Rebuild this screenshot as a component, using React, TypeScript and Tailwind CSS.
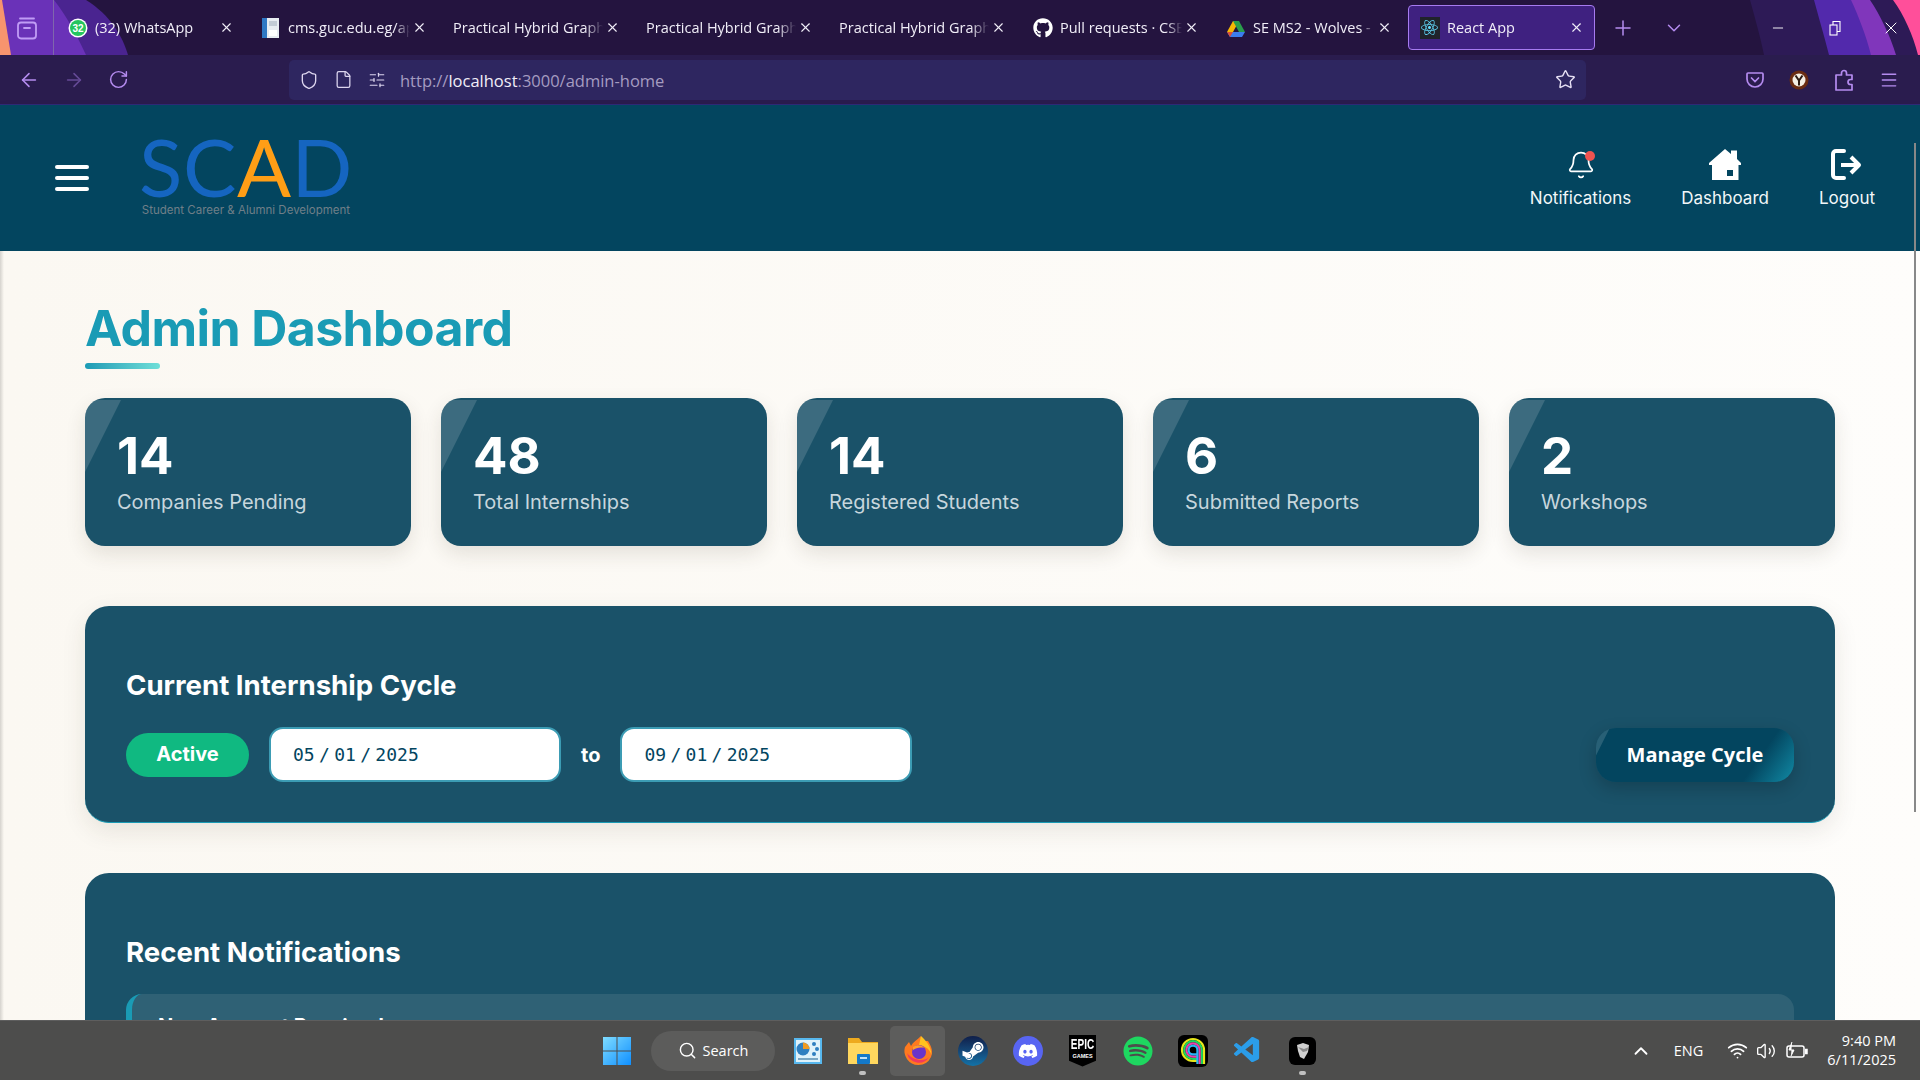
import {
  ArrowLeft,
  ArrowRight,
  Bell,
  ChevronDown,
  ChevronUp,
  File,
  Menu,
  Minus,
  Plus,
  RotateCw,
  Search,
  Shield,
  SlidersHorizontal,
  Star,
  Volume2,
  Wifi,
  X,
} from "lucide-react";
import { FaDiscord, FaGithub, FaReact, FaSpotify, FaSteamSymbol } from "react-icons/fa";
import { VscVscode } from "react-icons/vsc";

const stats = [
  { value: "14", label: "Companies Pending" },
  { value: "48", label: "Total Internships" },
  { value: "14", label: "Registered Students" },
  { value: "6", label: "Submitted Reports" },
  { value: "2", label: "Workshops" },
];

function WhatsAppIcon() {
  return (
    <svg width="20" height="20" viewBox="0 0 20 20">
      <circle cx="10" cy="10" r="9.5" fill="#fff" />
      <circle cx="10" cy="10" r="8" fill="#25c55f" />
      <text x="10" y="13.5" textAnchor="middle" fontSize="10" fontWeight="700" fill="#fff" fontFamily="Liberation Sans">
        32
      </text>
    </svg>
  );
}

function CmsIcon() {
  return (
    <svg width="20" height="20" viewBox="0 0 20 20">
      <rect x="1" y="0" width="17" height="20" fill="#e8edf2" />
      <rect x="1" y="0" width="5" height="20" fill="#2f78c4" />
      <rect x="8" y="3" width="8" height="5" fill="#c3ccd6" />
      <rect x="8" y="12" width="8" height="6" fill="#fff" />
    </svg>
  );
}

function DriveIcon() {
  return (
    <svg width="20" height="20" viewBox="0 0 20 20">
      <polygon points="7,1 13,1 7,12 1,12" fill="#f6b704" transform="translate(0 2)" />
      <polygon points="13,3 19,14 13,14 7,3" fill="#2a9d4c" />
      <polygon points="1,14 19,14 16,19 4,19" fill="#3b7ded" />
      <polygon points="7,14 1,14 4,19" fill="#d94f3a" />
    </svg>
  );
}

function ReactTabIcon() {
  return (
    <span className="flex h-[22px] w-[20px] items-center justify-center bg-[#20232a]">
      <FaReact size={17} color="#61dafb" />
    </span>
  );
}

type TabInfo = { title: string; icon?: React.ReactNode; active?: boolean };

const tabs: TabInfo[] = [
  { title: "(32) WhatsApp", icon: <WhatsAppIcon /> },
  { title: "cms.guc.edu.eg/apps/student", icon: <CmsIcon /> },
  { title: "Practical Hybrid Graph-based" },
  { title: "Practical Hybrid Graph-based" },
  { title: "Practical Hybrid Graph-based" },
  { title: "Pull requests · CSEN", icon: <FaGithub size={20} color="#fff" /> },
  { title: "SE MS2 - Wolves - Google", icon: <DriveIcon /> },
  { title: "React App", icon: <ReactTabIcon />, active: true },
];

function BrowserTab({ tab }: { tab: TabInfo }) {
  return (
    <div className="h-full w-[193px] shrink-0 px-[3px] py-[5px]">
      <div
        className={`flex h-full items-center rounded-[4px] pl-[10px] pr-[10px] ${
          tab.active ? "border border-[#a67bf0] bg-[#3f2180]" : ""
        }`}
      >
        {tab.icon && <span className="mr-[7px] flex w-[21px] shrink-0 items-center justify-center">{tab.icon}</span>}
        <span className="min-w-0 flex-1 overflow-hidden whitespace-nowrap pt-[1px] text-[14.5px] text-[#f1eef8] [mask-image:linear-gradient(to_right,black_88%,transparent)]">
          {tab.title}
        </span>
        <X size={15} color="#f1eef8" strokeWidth={1.8} className="ml-[2px] shrink-0" />
      </div>
    </div>
  );
}

function BrowserChrome() {
  return (
    <div className="shrink-0 font-['Open_Sans',sans-serif]">
      {/* tab strip */}
      <div className="relative flex h-[55px] items-center bg-[#24143f]">
        <svg className="absolute left-0 top-0 h-[55px] w-[140px]" viewBox="0 0 140 55">
          <path d="M0 0 H86 C110 15 122 35 128 55 H0 Z" fill="#4a2490" />
          <path d="M40 0 H54 C68 18 78 38 86 55 H0 V0 Z" fill="#6a32b8" />
          <path d="M0 0 H2 L11 55 H0 Z" fill="#f7946e" />
        </svg>
        <svg className="absolute right-0 top-0 h-[55px] w-[170px]" viewBox="0 0 170 55">
          <path d="M0 0 H170 V55 H14 C10 35 4 15 0 0 Z" fill="#2d1a56" />
          <path d="M64 0 H170 V55 H79 C74 35 68 15 64 0 Z" fill="#5229ac" />
          <path d="M101 0 H170 V55 H121 C116 35 108 15 101 0 Z" fill="#8036bb" />
          <path d="M120 0 H170 V55 H146 C140 35 130 15 120 0 Z" fill="#2d1a56" />
          <path d="M143 0 H170 V55 H168 C163 35 154 15 143 0 Z" fill="#ff4f9a" />
        </svg>
        <div className="relative flex h-full w-[54px] shrink-0 items-center justify-center border-r border-[#7f66ad]">
          <svg width="22" height="24" viewBox="0 0 22 24" fill="none" stroke="#c09cf5" strokeWidth="1.8">
            <path d="M4 2.5 H18" strokeLinecap="round" />
            <rect x="2" y="6.5" width="18" height="16" rx="3" />
            <path d="M8 12 H14" strokeLinecap="round" />
          </svg>
        </div>
        <div className="relative flex h-full">
          {tabs.map((tab, i) => (
            <BrowserTab key={i} tab={tab} />
          ))}
        </div>
        <div className="relative ml-[13px] flex items-center gap-[28px]">
          <Plus size={24} color="#b58cf0" strokeWidth={1.5} />
          <ChevronDown size={22} color="#b58cf0" strokeWidth={1.6} />
        </div>
        <div className="relative ml-auto flex items-center pr-[19px] text-white">
          <Minus size={16} strokeWidth={1.4} />
          <svg width="16" height="16" viewBox="0 0 16 16" fill="none" stroke="#fff" strokeWidth="1.1" className="ml-[41px]">
            <rect x="3" y="5" width="7" height="10" />
            <path d="M6 5 V1.5 H13 V11.5 H10" />
          </svg>
          <X size={20} strokeWidth={1.2} className="ml-[38px]" />
        </div>
      </div>

      {/* toolbar */}
      <div className="flex h-[49px] items-center bg-[#2a1c4e] pl-[18px] pr-[21px]">
        <div className="flex w-[271px] shrink-0 items-center gap-[23px]">
          <ArrowLeft size={22} color="#b58cf0" strokeWidth={1.7} />
          <ArrowRight size={22} color="#654a96" strokeWidth={1.7} />
          <RotateCw size={21} color="#b58cf0" strokeWidth={1.7} />
        </div>
        <div className="flex h-[40px] w-[1297px] shrink-0 items-center rounded-[5px] bg-[#2e2660] pl-[10px] pr-[10px]">
          <Shield size={20} color="#ddd6ef" strokeWidth={1.6} />
          <File size={19} color="#ddd6ef" strokeWidth={1.6} className="ml-[15px]" />
          <SlidersHorizontal size={18} color="#ddd6ef" strokeWidth={1.6} className="ml-[15px]" />
          <span className="ml-[14px] pt-[3px] text-[16.5px] text-[#a59cc0]">
            http://<span className="text-[#f1eef8]">localhost</span>:3000/admin-home
          </span>
          <Star size={21} color="#e6e0f4" strokeWidth={1.6} className="ml-auto" />
        </div>
        <div className="ml-auto flex items-center gap-[24px]">
          <svg width="20" height="20" viewBox="0 0 20 20" fill="none" stroke="#b58cf0" strokeWidth="1.7">
            <path d="M3 3 H17 A1 1 0 0 1 18 4 V9 A8 8 0 0 1 2 9 V4 A1 1 0 0 1 3 3 Z" />
            <path d="M6.5 8 L10 11.5 L13.5 8" strokeLinecap="round" />
          </svg>
          <svg width="20" height="24" viewBox="0 0 20 24">
            <circle cx="10" cy="12" r="9.5" fill="#6a2c12" />
            <circle cx="10" cy="12" r="6.5" fill="#f4eee4" />
            <path d="M6.5 7.5 L10 12.5 L13.5 7.5 M10 12.5 V17.5" stroke="#2c1a12" strokeWidth="2" fill="none" />
          </svg>
          <svg width="22" height="24" viewBox="0 0 22 24" fill="none" stroke="#b58cf0" strokeWidth="1.7" strokeLinejoin="round">
            <path d="M3 7 H8.5 V5 a2.5 2.5 0 0 1 5 0 V7 H19 V11.5 H17.5 a2.5 2.5 0 0 0 0 5 H19 V22 H3 Z" />
          </svg>
          <Menu size={20} color="#b58cf0" strokeWidth={1.7} />
        </div>
      </div>
      <div className="h-px bg-[#2f2a78]" />
    </div>
  );
}

function ScadLogo() {
  return (
    <div className="ml-[52px] flex w-[210px] flex-col items-center pb-[4px] font-['Lato',sans-serif]">
      <div className="whitespace-nowrap text-[80px] font-normal leading-[62px] tracking-[0.5px] text-[#1565c0]">
        SC<span className="text-[#ff9e16]">A</span>D
      </div>
      <div className="mt-[6px] whitespace-nowrap font-['Inter',sans-serif] text-[11.5px] leading-[14px] text-[#6f7f88]">
        Student Career &amp; Alumni Development
      </div>
    </div>
  );
}

function AppHeader() {
  return (
    <header className="flex h-[146px] shrink-0 items-center bg-[#03455f] pl-[55px] pr-[45px] shadow-[0_3px_8px_rgba(0,0,0,0.12)]">
      <div className="flex w-[34px] flex-col gap-[7px]">
        <span className="h-[4px] rounded-full bg-white" />
        <span className="h-[4px] rounded-full bg-white" />
        <span className="h-[4px] rounded-full bg-white" />
      </div>
      <ScadLogo />
      <nav className="ml-auto flex items-center gap-[50px] pt-[2px] text-[17px] leading-[22px] text-[#f2f7f9]">
        <button className="flex flex-col items-center gap-[7px]">
          <span className="relative flex h-[31px] w-[32px] items-center justify-center">
            <Bell size={30} color="#fff" strokeWidth={1.4} />
            <span className="absolute right-[2px] top-[2px] h-[10px] w-[10px] rounded-full bg-[#ef5350]" />
          </span>
          Notifications
        </button>
        <button className="flex flex-col items-center gap-[7px]">
          <svg width="32" height="31" viewBox="0 0 32 31" fill="#fff">
            <path
              fillRule="evenodd"
              d="M16 0 L22 5 V1.5 H28 V10 L32 14 V16 H29.5 V31 H3 V16 H0 V14 Z M18 21 H24 V27 H18 Z"
            />
          </svg>
          Dashboard
        </button>
        <button className="flex flex-col items-center gap-[7px]">
          <svg width="32" height="31" viewBox="0 0 32 31" fill="none" stroke="#fff" strokeWidth="4">
            <path d="M13 2 H5 A3 3 0 0 0 2 5 V26 A3 3 0 0 0 5 29 H13" strokeLinecap="round" />
            <path d="M10 16 H27" />
            <path d="M20 8 L28 16 L20 24" strokeLinejoin="round" />
          </svg>
          Logout
        </button>
      </nav>
    </header>
  );
}

function StatCard({ value, label }: { value: string; label: string }) {
  return (
    <div className="relative overflow-hidden rounded-[20px] bg-[#1a5269] px-[32px] pt-[26px] shadow-[0_8px_20px_rgba(60,50,30,0.12)]">
      {/* corner sheen */}
      <div className="absolute left-0 top-[2px] h-[72px] w-[36px] bg-white/15 [clip-path:polygon(0_0,100%_0,0_100%)]" />
      <div className="text-[51px] font-bold leading-[64px] text-white">{value}</div>
      <div className="mt-[0px] text-[20px] leading-[28px] text-[#c7d6dd]">{label}</div>
    </div>
  );
}

function CycleDate({ value }: { value: string }) {
  return (
    <div className="flex h-[55px] w-[292px] items-center rounded-[14px] border-2 border-[#3c9cb4] bg-white pl-[22px] font-['DejaVu_Sans_Mono',monospace] text-[18px] text-[#03455f] [word-spacing:-6.5px]">
      {value}
    </div>
  );
}

function Taskbar() {
  return (
    <div className="relative z-10 flex h-[60px] shrink-0 items-center border-t border-[#5e5e5e] bg-[#4d4d4c] pl-[602px] pr-[24px] text-white">
      <svg width="30" height="30" viewBox="0 0 30 30">
        <defs>
          <linearGradient id="winLogo" x1="0" y1="0" x2="1" y2="1">
            <stop offset="0" stopColor="#7fdcff" />
            <stop offset="1" stopColor="#0f8fff" />
          </linearGradient>
        </defs>
        <path d="M1 1 H14.5 V14.5 H1 Z M15.5 1 H29 V14.5 H15.5 Z M1 15.5 H14.5 V29 H1 Z M15.5 15.5 H29 V29 H15.5 Z" fill="url(#winLogo)" />
      </svg>
      <div className="ml-[19px] flex h-[40px] w-[124px] items-center justify-center gap-[6px] rounded-full bg-[#5c5c5b] font-['Open_Sans',sans-serif] text-[14.5px]">
        <Search size={19} strokeWidth={1.8} />
        Search
      </div>
      <div className="ml-[5px] flex items-center">
        <TaskSlot>
          <svg width="30" height="30" viewBox="0 0 30 30">
            <rect x="1" y="2" width="28" height="26" fill="#58b8ee" />
            <rect x="3" y="4" width="24" height="22" fill="#dff2fb" />
            <circle cx="10" cy="13" r="6.5" fill="#2f7fc0" />
            <path d="M10 13 V6.5 A6.5 6.5 0 0 1 16.5 13 Z" fill="#ef9a22" />
            <circle cx="21" cy="8" r="2" fill="#2f7fc0" />
            <circle cx="24" cy="13" r="2" fill="#2f7fc0" />
            <circle cx="21" cy="18" r="2" fill="#2f7fc0" />
            <rect x="5" y="22" width="20" height="2" fill="#7aa7c4" />
          </svg>
        </TaskSlot>
        <TaskSlot dot>
          <svg width="32" height="32" viewBox="0 0 32 32">
            <path d="M1 3 H12 L15 7 H31 V29 H1 Z" fill="#eeaa1e" />
            <rect x="1" y="8" width="30" height="21" fill="#ffd75e" />
            <rect x="10" y="19" width="13" height="10" rx="1" fill="#1479c9" />
            <rect x="13" y="22" width="7" height="2" fill="#bfe2fa" />
          </svg>
        </TaskSlot>
        <TaskSlot highlight>
          <svg width="30" height="32" viewBox="0 0 30 32">
            <path d="M15 30 A14 14 0 0 1 2 12 L6 7 L8 11 C10 7 14 5 18 1 C18 6 22 6 25 6 C29 12 30 17 28 22 A14 14 0 0 1 15 30 Z" fill="#ff7a1f" />
            <path d="M18 1 C22 5 28 10 28.5 20 C26 12 20 11 16 10 Z" fill="#ffc21f" />
            <path d="M4 18 A12 12 0 0 0 26 22 C22 27 10 26 4 18 Z" fill="#f03a5f" />
            <circle cx="16" cy="17" r="7" fill="#6a34c9" />
            <path d="M10 12 C14 9 20 10 21 13 C17 12 13 13 10 15 Z" fill="#ff9d2b" />
          </svg>
        </TaskSlot>
        <TaskSlot>
          <span className="flex h-[30px] w-[30px] items-center justify-center overflow-hidden rounded-full bg-gradient-to-b from-[#0f1f4a] to-[#1273a8]">
            <FaSteamSymbol size={24} color="#fff" />
          </span>
        </TaskSlot>
        <TaskSlot>
          <span className="flex h-[30px] w-[30px] items-center justify-center rounded-full bg-[#5865f2]">
            <FaDiscord size={20} color="#fff" />
          </span>
        </TaskSlot>
        <TaskSlot>
          <span className="flex h-[32px] w-[27px] flex-col items-center bg-black pt-[2px] font-['Liberation_Sans',sans-serif] text-white [clip-path:polygon(0_0,100%_0,100%_82%,50%_100%,0_82%)]">
            <span className="origin-top scale-y-150 text-[10px] font-bold leading-[10px]">EPIC</span>
            <span className="mt-[6px] text-[5.5px] font-bold leading-[7px]">GAMES</span>
          </span>
        </TaskSlot>
        <TaskSlot>
          <FaSpotify size={30} color="#1ed760" />
        </TaskSlot>
        <TaskSlot>
          <svg width="30" height="32" viewBox="0 0 30 32" fill="none">
            <rect width="30" height="32" rx="6" fill="#000" />
            <path d="M26 29 V15 a11 11 0 1 0 -11 11 H20" stroke="#e6e619" strokeWidth="2.2" />
            <path d="M23.8 29 V15 a8.8 8.8 0 1 0 -8.8 8.8 H20" stroke="#1ed760" strokeWidth="2.2" />
            <path d="M21.6 29 V15 a6.6 6.6 0 1 0 -6.6 6.6 H20" stroke="#ee3fa8" strokeWidth="2.2" />
            <path d="M19.4 29 V15 a4.4 4.4 0 1 0 -4.4 4.4 H19" stroke="#2ab5f5" strokeWidth="2.2" />
          </svg>
        </TaskSlot>
        <TaskSlot>
          <VscVscode size={31} color="#2b9de9" />
        </TaskSlot>
        <TaskSlot dot>
          <span className="flex h-[28px] w-[27px] items-center justify-center rounded-[6px] bg-black">
            <svg width="16" height="18" viewBox="0 0 16 18">
              <path d="M2 3 L8 1 L14 3 L13 10 L9 17 L5 15 L3 9 Z" fill="#cfcfcf" />
              <path d="M3 5 L9 7 L14 5 L12 9 L8 10 Z" fill="#8a8a8a" />
            </svg>
          </span>
        </TaskSlot>
      </div>
      <div className="ml-auto flex items-center font-['Open_Sans',sans-serif]">
        <ChevronUp size={22} strokeWidth={2} />
        <span className="ml-[22px] text-[14.5px]">ENG</span>
        <Wifi size={21} strokeWidth={2} className="ml-[24px]" />
        <Volume2 size={20} strokeWidth={1.6} className="ml-[8px]" />
        <svg width="22" height="20" viewBox="0 0 22 20" fill="none" stroke="#fff" strokeWidth="1.5" className="ml-[10px]">
          <rect x="1" y="5" width="17" height="11" rx="2" />
          <path d="M19 8.5 H21 V12.5 H19" fill="#fff" />
          <path d="M6 1 L3 9 H8 L5 15" fill="#fff" strokeWidth="1" />
        </svg>
        <div className="ml-[19px] pb-[2px] text-right text-[14.5px] leading-[19px]">
          <div>9:40 PM</div>
          <div>6/11/2025</div>
        </div>
      </div>
    </div>
  );
}

function TaskSlot({ children, dot, highlight }: { children: React.ReactNode; dot?: boolean; highlight?: boolean }) {
  return (
    <div
      className={`relative flex h-[50px] w-[55px] items-center justify-center rounded-[5px] ${
        highlight ? "bg-[#5d5d5c]" : ""
      }`}
    >
      {children}
      {dot && <span className="absolute bottom-[1px] h-[4px] w-[7px] rounded-full bg-[#c0c0c0]" />}
    </div>
  );
}

export default function App() {
  return (
    <div className="relative flex h-screen w-[1920px] flex-col overflow-hidden bg-[#fdfaf5] font-['Inter',sans-serif]">
      {/* page scrollbar */}
      <div className="absolute right-[4px] top-[143px] z-20 h-[669px] w-[2px] bg-[#888]" />
      <BrowserChrome />
      <AppHeader />
      <main className="relative min-h-0 flex-1 overflow-hidden bg-gradient-to-r from-[#fbf8f2] to-[#fefdfb] px-[85px] pt-[47px]">
        <div className="absolute bottom-0 left-0 top-0 w-[4px] bg-gradient-to-r from-black/15 to-transparent" />
        <h1 className="text-[50px] font-bold leading-[60px] tracking-[-0.6px] text-[#1a9bb5]">Admin Dashboard</h1>
        <div className="mt-[5px] h-[6px] w-[75px] rounded-full bg-gradient-to-r from-[#1a9bb5] to-[#6fdfd8]" />

        <div className="mt-[29px] grid h-[148px] grid-cols-5 gap-[30px]">
          {stats.map((s) => (
            <StatCard key={s.label} value={s.value} label={s.label} />
          ))}
        </div>

        <section className="mt-[60px] h-[217px] rounded-[24px] border-b border-[#1a9bb5] bg-[#1a5269] px-[41px] pt-[62px] shadow-[0_8px_24px_rgba(60,50,30,0.1)]">
          <h2 className="text-[27.6px] font-bold leading-[34px] text-white">Current Internship Cycle</h2>
          <div className="mt-[25px] flex items-center">
            <span className="flex h-[44px] w-[123px] items-center justify-center rounded-full bg-[#10b981] pb-[1px] text-[20px] font-bold text-white">
              Active
            </span>
            <div className="ml-[20px]">
              <CycleDate value="05 / 01 / 2025" />
            </div>
            <span className="mx-[20px] text-[20px] font-bold text-white">to</span>
            <CycleDate value="09 / 01 / 2025" />
            <button className="relative ml-auto h-[54px] w-[198px] overflow-hidden rounded-[20px] bg-[linear-gradient(125deg,#03455f_78%,#118aa5)] font-['Open_Sans',sans-serif] text-[20px] font-bold text-white shadow-[0_6px_18px_rgba(0,0,0,0.2)]">
              <span className="absolute left-0 top-0 h-[28px] w-[14px] bg-white/15 [clip-path:polygon(0_0,100%_0,0_100%)]" />
              Manage Cycle
            </button>
          </div>
        </section>

        <section className="mt-[50px] rounded-[24px] bg-[#1a5269] px-[41px] pt-[62px] pb-[40px]">
          <h2 className="text-[27.6px] font-bold leading-[34px] text-white">Recent Notifications</h2>
          <div className="mt-[25px] h-[110px] rounded-[16px] border-l-[6px] border-[#1a9bb5] bg-[#2f6175] pl-[26px] pt-[17px] text-[20px] font-bold leading-[30px] text-white">
            New Account Received
          </div>
        </section>
      </main>
      <Taskbar />
    </div>
  );
}
